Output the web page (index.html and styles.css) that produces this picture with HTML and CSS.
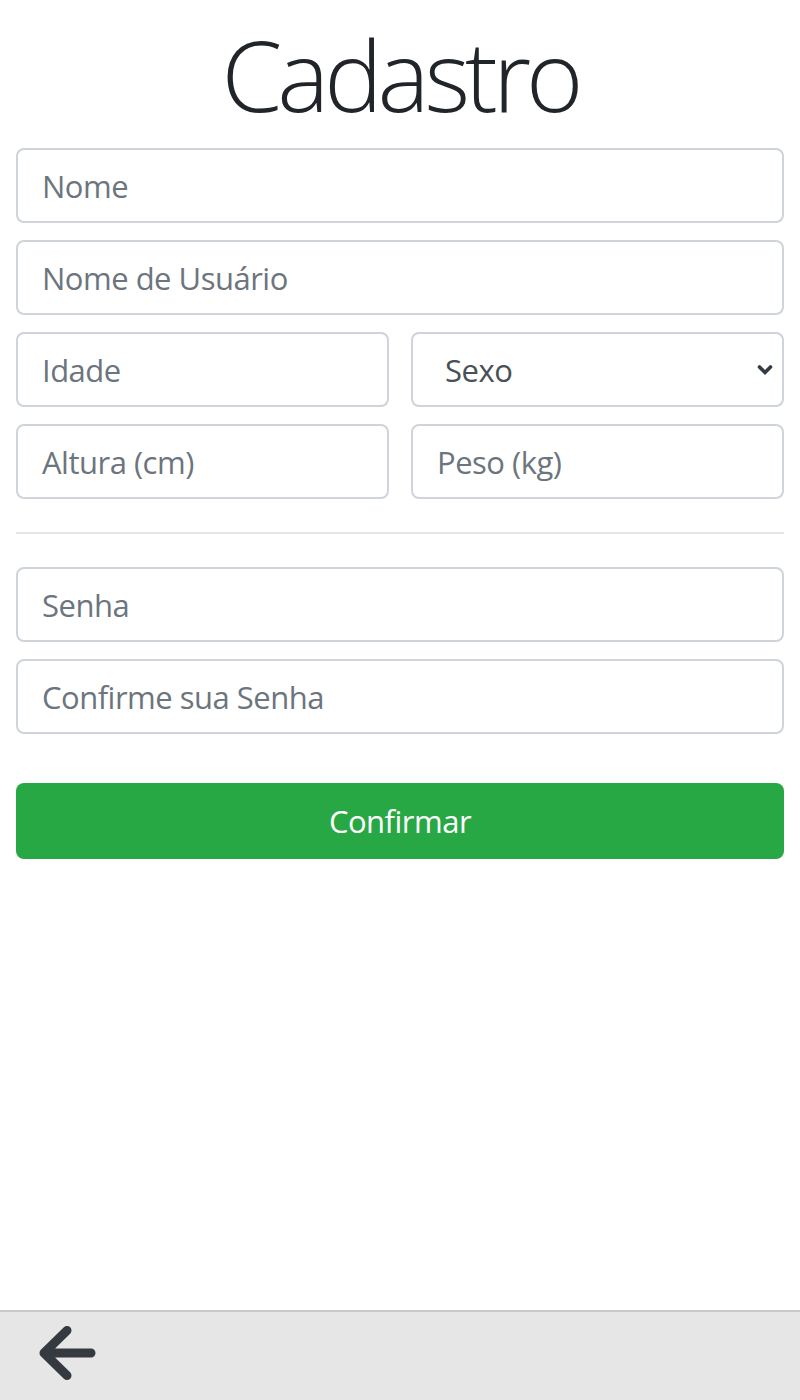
FILE: index.html
```html
<!DOCTYPE html>
<html lang="pt-BR">
<head>
<meta charset="utf-8">
<title>Cadastro</title>
<link rel="stylesheet" href="styles.css">
</head>
<body>
<main class="page">
  <h1 class="title">Cadastro</h1>
  <form class="form">
    <input class="field" type="text" placeholder="Nome">
    <input class="field" type="text" placeholder="Nome de Usuário">
    <div class="row">
      <input class="field" type="text" placeholder="Idade">
      <div class="select-wrap">
        <select class="field select">
          <option>Sexo</option>
        </select>
        <svg class="chev" viewBox="0 0 16 12" width="16" height="12"><path d="M2.5 3 L8 8.5 L13.5 3" fill="none" stroke="#343a40" stroke-width="3.6" stroke-linecap="round" stroke-linejoin="miter"/></svg>
      </div>
    </div>
    <div class="row">
      <input class="field" type="text" placeholder="Altura (cm)">
      <input class="field" type="text" placeholder="Peso (kg)">
    </div>
    <hr class="divider">
    <input class="field" type="password" placeholder="Senha">
    <input class="field" type="password" placeholder="Confirme sua Senha">
    <button class="btn" type="button">Confirmar</button>
  </form>
</main>
<footer class="footer">
  <svg class="back" viewBox="35 1320 66 66" width="66" height="66"><path d="M91 1353 H44 M67 1330.5 L44 1353 L67 1375.5" fill="none" stroke="#343a40" stroke-width="9" stroke-linecap="round" stroke-linejoin="round"/></svg>
</footer>
</body>
</html>
```
FILE: styles.css
```css
* { box-sizing: border-box; }
html, body { margin: 0; padding: 0; }
body {
  width: 800px;
  height: 1400px;
  display: flex;
  flex-direction: column;
  font-family: "Open Sans", "Noto Sans", sans-serif;
  color: #212529;
  background: #fff;
}
.page {
  flex: 1;
  padding: 0 16px;
}
.title {
  margin: 14px 0 14px;
  font-size: 98px;
  line-height: 120px;
  font-weight: 300;
  text-align: center;
  letter-spacing: -5px;
}
.form {
  display: flex;
  flex-direction: column;
  gap: 17px;
}
.row {
  display: grid;
  grid-template-columns: 1fr 1fr;
  gap: 22px;
}
.field {
  display: block;
  width: 100%;
  height: 75px;
  padding: 0 24px;
  border: 2px solid #ced4da;
  border-radius: 8px;
  font-family: inherit;
  font-size: 31px;
  letter-spacing: -0.5px;
  color: #495057;
  background: #fff;
  outline: none;
}
.field::placeholder { color: #6c757d; opacity: 1; }
.select-wrap { position: relative; }
.select {
  appearance: none;
  -webkit-appearance: none;
  padding-left: 32px;
}
.chev {
  position: absolute;
  right: 11px;
  top: 32px;
  pointer-events: none;
}
.divider {
  margin: 16px 0 16px;
  border: 0;
  border-top: 2px solid #e5e5e5;
  height: 0;
}
.btn {
  margin-top: 32px;
  height: 76px;
  border: 0;
  border-radius: 8px;
  background: #28a745;
  color: #fff;
  font-family: inherit;
  font-size: 31px;
  letter-spacing: -0.5px;
}
.footer {
  height: 90px;
  background: #e6e6e6;
  border-top: 2px solid #c9c9c9;
  padding: 8px 0 0 35px;
}
.back { display: block; }
```
